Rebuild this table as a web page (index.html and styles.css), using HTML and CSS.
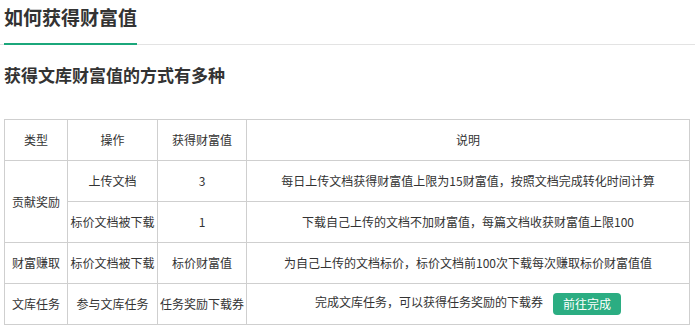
FILE: index.html
```html
<!DOCTYPE html>
<html lang="zh">
<head>
<meta charset="utf-8">
<title>如何获得财富值</title>
<link rel="stylesheet" href="styles.css">
</head>
<body>
<div class="page">
  <div class="tabs">
    <h1 class="tab">如何获得财富值</h1>
  </div>
  <h2 class="subtitle">获得文库财富值的方式有多种</h2>
  <table class="rules">
    <colgroup>
      <col class="c1"><col class="c2"><col class="c3"><col class="c4">
    </colgroup>
    <tr>
      <td>类型</td><td>操作</td><td>获得财富值</td><td>说明</td>
    </tr>
    <tr>
      <td rowspan="2">贡献奖励</td><td>上传文档</td><td>3</td><td>每日上传文档获得财富值上限为15财富值，按照文档完成转化时间计算</td>
    </tr>
    <tr>
      <td>标价文档被下载</td><td>1</td><td>下载自己上传的文档不加财富值，每篇文档收获财富值上限100</td>
    </tr>
    <tr>
      <td>财富赚取</td><td>标价文档被下载</td><td>标价财富值</td><td>为自己上传的文档标价，标价文档前100次下载每次赚取标价财富值值</td>
    </tr>
    <tr>
      <td>文库任务</td><td>参与文库任务</td><td>任务奖励下载券</td><td>完成文库任务，可以获得任务奖励的下载券<a class="btn">前往完成</a></td>
    </tr>
  </table>
</div>
</body>
</html>
```
FILE: styles.css
```css
html, body {
  margin: 0;
  padding: 0;
  background: #fff;
}
body {
  font-family: "Noto Sans CJK SC", "Noto Sans", sans-serif;
  color: #333;
}
.page {
  width: 695px;
}
.tabs {
  display: flex;
  border-bottom: 1px solid #e3e3e3;
  padding-left: 4px;
}
.tab {
  margin: 0 0 -1px 0;
  padding: 3px 0 12px 0;
  font-size: 19px;
  line-height: 28px;
  font-weight: bold;
  color: #333;
  border-bottom: 2px solid #1ba77b;
  letter-spacing: 0;
}
.subtitle {
  margin: 18px 0 0 4px;
  font-size: 17px;
  line-height: 24px;
  font-weight: bold;
  color: #333;
}
.rules {
  margin: 32px 0 0 4px;
  border-collapse: collapse;
  table-layout: fixed;
  width: 686px;
  font-size: 12px;
  color: #333;
}
.rules .c1 { width: 63px; }
.rules .c2 { width: 90px; }
.rules .c3 { width: 89px; }
.rules td {
  border: 1px solid #cfcfcf;
  height: 40px;
  padding: 0;
  text-align: center;
  vertical-align: middle;
  white-space: nowrap;
  line-height: 18px;
}
.btn {
  display: inline-block;
  margin-left: 10px;
  padding: 0 10px;
  height: 22px;
  line-height: 22px;
  background: #2bad82;
  color: #fff;
  border-radius: 4px;
  font-size: 12px;
  vertical-align: middle;
  cursor: pointer;
}
```
